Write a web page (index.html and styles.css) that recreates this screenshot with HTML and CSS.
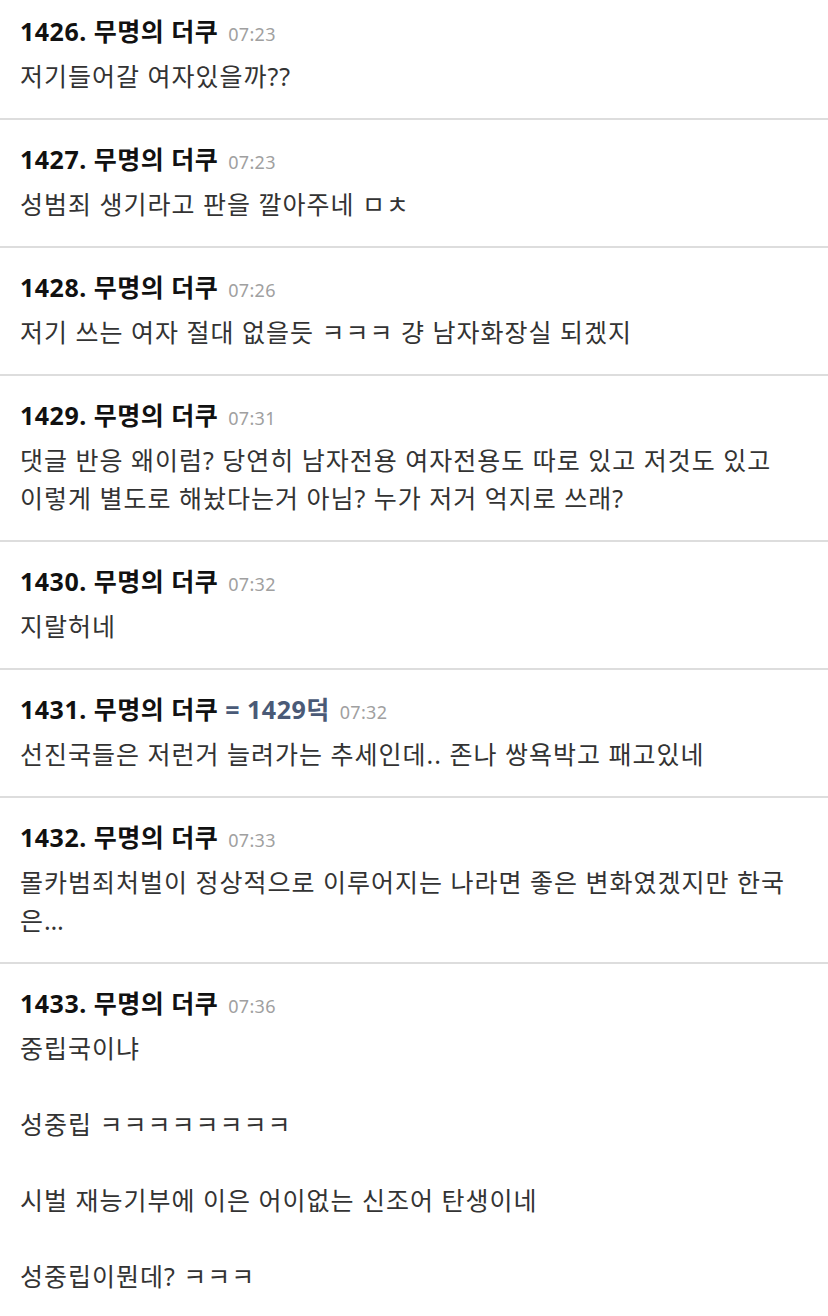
FILE: index.html
```html
<!DOCTYPE html>
<html lang="ko">
  <head>
    <meta charset="UTF-8" />
    <meta name="viewport" content="width=device-width, initial-scale=1.0" />
    <title>댓글</title>
    <link rel="stylesheet" href="styles.css">
  </head>
  <body>
    <div class="list">
      <div class="comment">
        <div class="head">1426. 무명의 더쿠 <span class="time">07:23</span></div>
        <p class="text">저기들어갈 여자있을까??</p>
      </div>
      <div class="comment">
        <div class="head">1427. 무명의 더쿠 <span class="time">07:23</span></div>
        <p class="text">성범죄 생기라고 판을 깔아주네 ㅁㅊ</p>
      </div>
      <div class="comment">
        <div class="head">1428. 무명의 더쿠 <span class="time">07:26</span></div>
        <p class="text">저기 쓰는 여자 절대 없을듯 ㅋㅋㅋ 걍 남자화장실 되겠지</p>
      </div>
      <div class="comment">
        <div class="head">1429. 무명의 더쿠 <span class="time">07:31</span></div>
        <p class="text">댓글 반응 왜이럼? 당연히 남자전용 여자전용도 따로 있고 저것도 있고 이렇게 별도로 해놨다는거 아님? 누가 저거 억지로 쓰래?</p>
      </div>
      <div class="comment">
        <div class="head">1430. 무명의 더쿠 <span class="time">07:32</span></div>
        <p class="text">지랄허네</p>
      </div>
      <div class="comment">
        <div class="head">1431. 무명의 더쿠 <span class="reply">= 1429덕</span> <span class="time">07:32</span></div>
        <p class="text">선진국들은 저런거 늘려가는 추세인데.. 존나 쌍욕박고 패고있네</p>
      </div>
      <div class="comment">
        <div class="head">1432. 무명의 더쿠 <span class="time">07:33</span></div>
        <p class="text">몰카범죄처벌이 정상적으로 이루어지는 나라면 좋은 변화였겠지만 한국은…</p>
      </div>
      <div class="comment">
        <div class="head">1433. 무명의 더쿠 <span class="time">07:36</span></div>
        <p class="text">중립국이냐<br><br>성중립 ㅋㅋㅋㅋㅋㅋㅋㅋ<br><br>시벌 재능기부에 이은 어이없는 신조어 탄생이네<br><br>성중립이뭔데? ㅋㅋㅋ</p>
      </div>
    </div>
  </body>
</html>
```
FILE: styles.css
```css
* {
  padding: 0;
  margin: 0;
}
body {
  background: #fff;
  font-family: "Noto Sans", "Noto Sans CJK KR", sans-serif;
  overflow: hidden;
}
.list {
  margin-top: -8px;
}
.comment {
  padding: 23px 30px 23px 20px;
  border-bottom: 2px solid #dddddd;
}
.head {
  font-size: 25px;
  font-weight: 700;
  line-height: 32px;
  height: 32px;
  color: #111;
  letter-spacing: 0.5px;
}
.time {
  margin-left: 3px;
  font-size: 18px;
  font-weight: 400;
  line-height: 1;
  color: #a0a0a0;
  letter-spacing: 0.3px;
}
.reply {
  color: #4a5a77;
}
.text {
  margin-top: 10px;
  font-size: 25px;
  line-height: 38px;
  color: #333;
  letter-spacing: 1px;
}
```
